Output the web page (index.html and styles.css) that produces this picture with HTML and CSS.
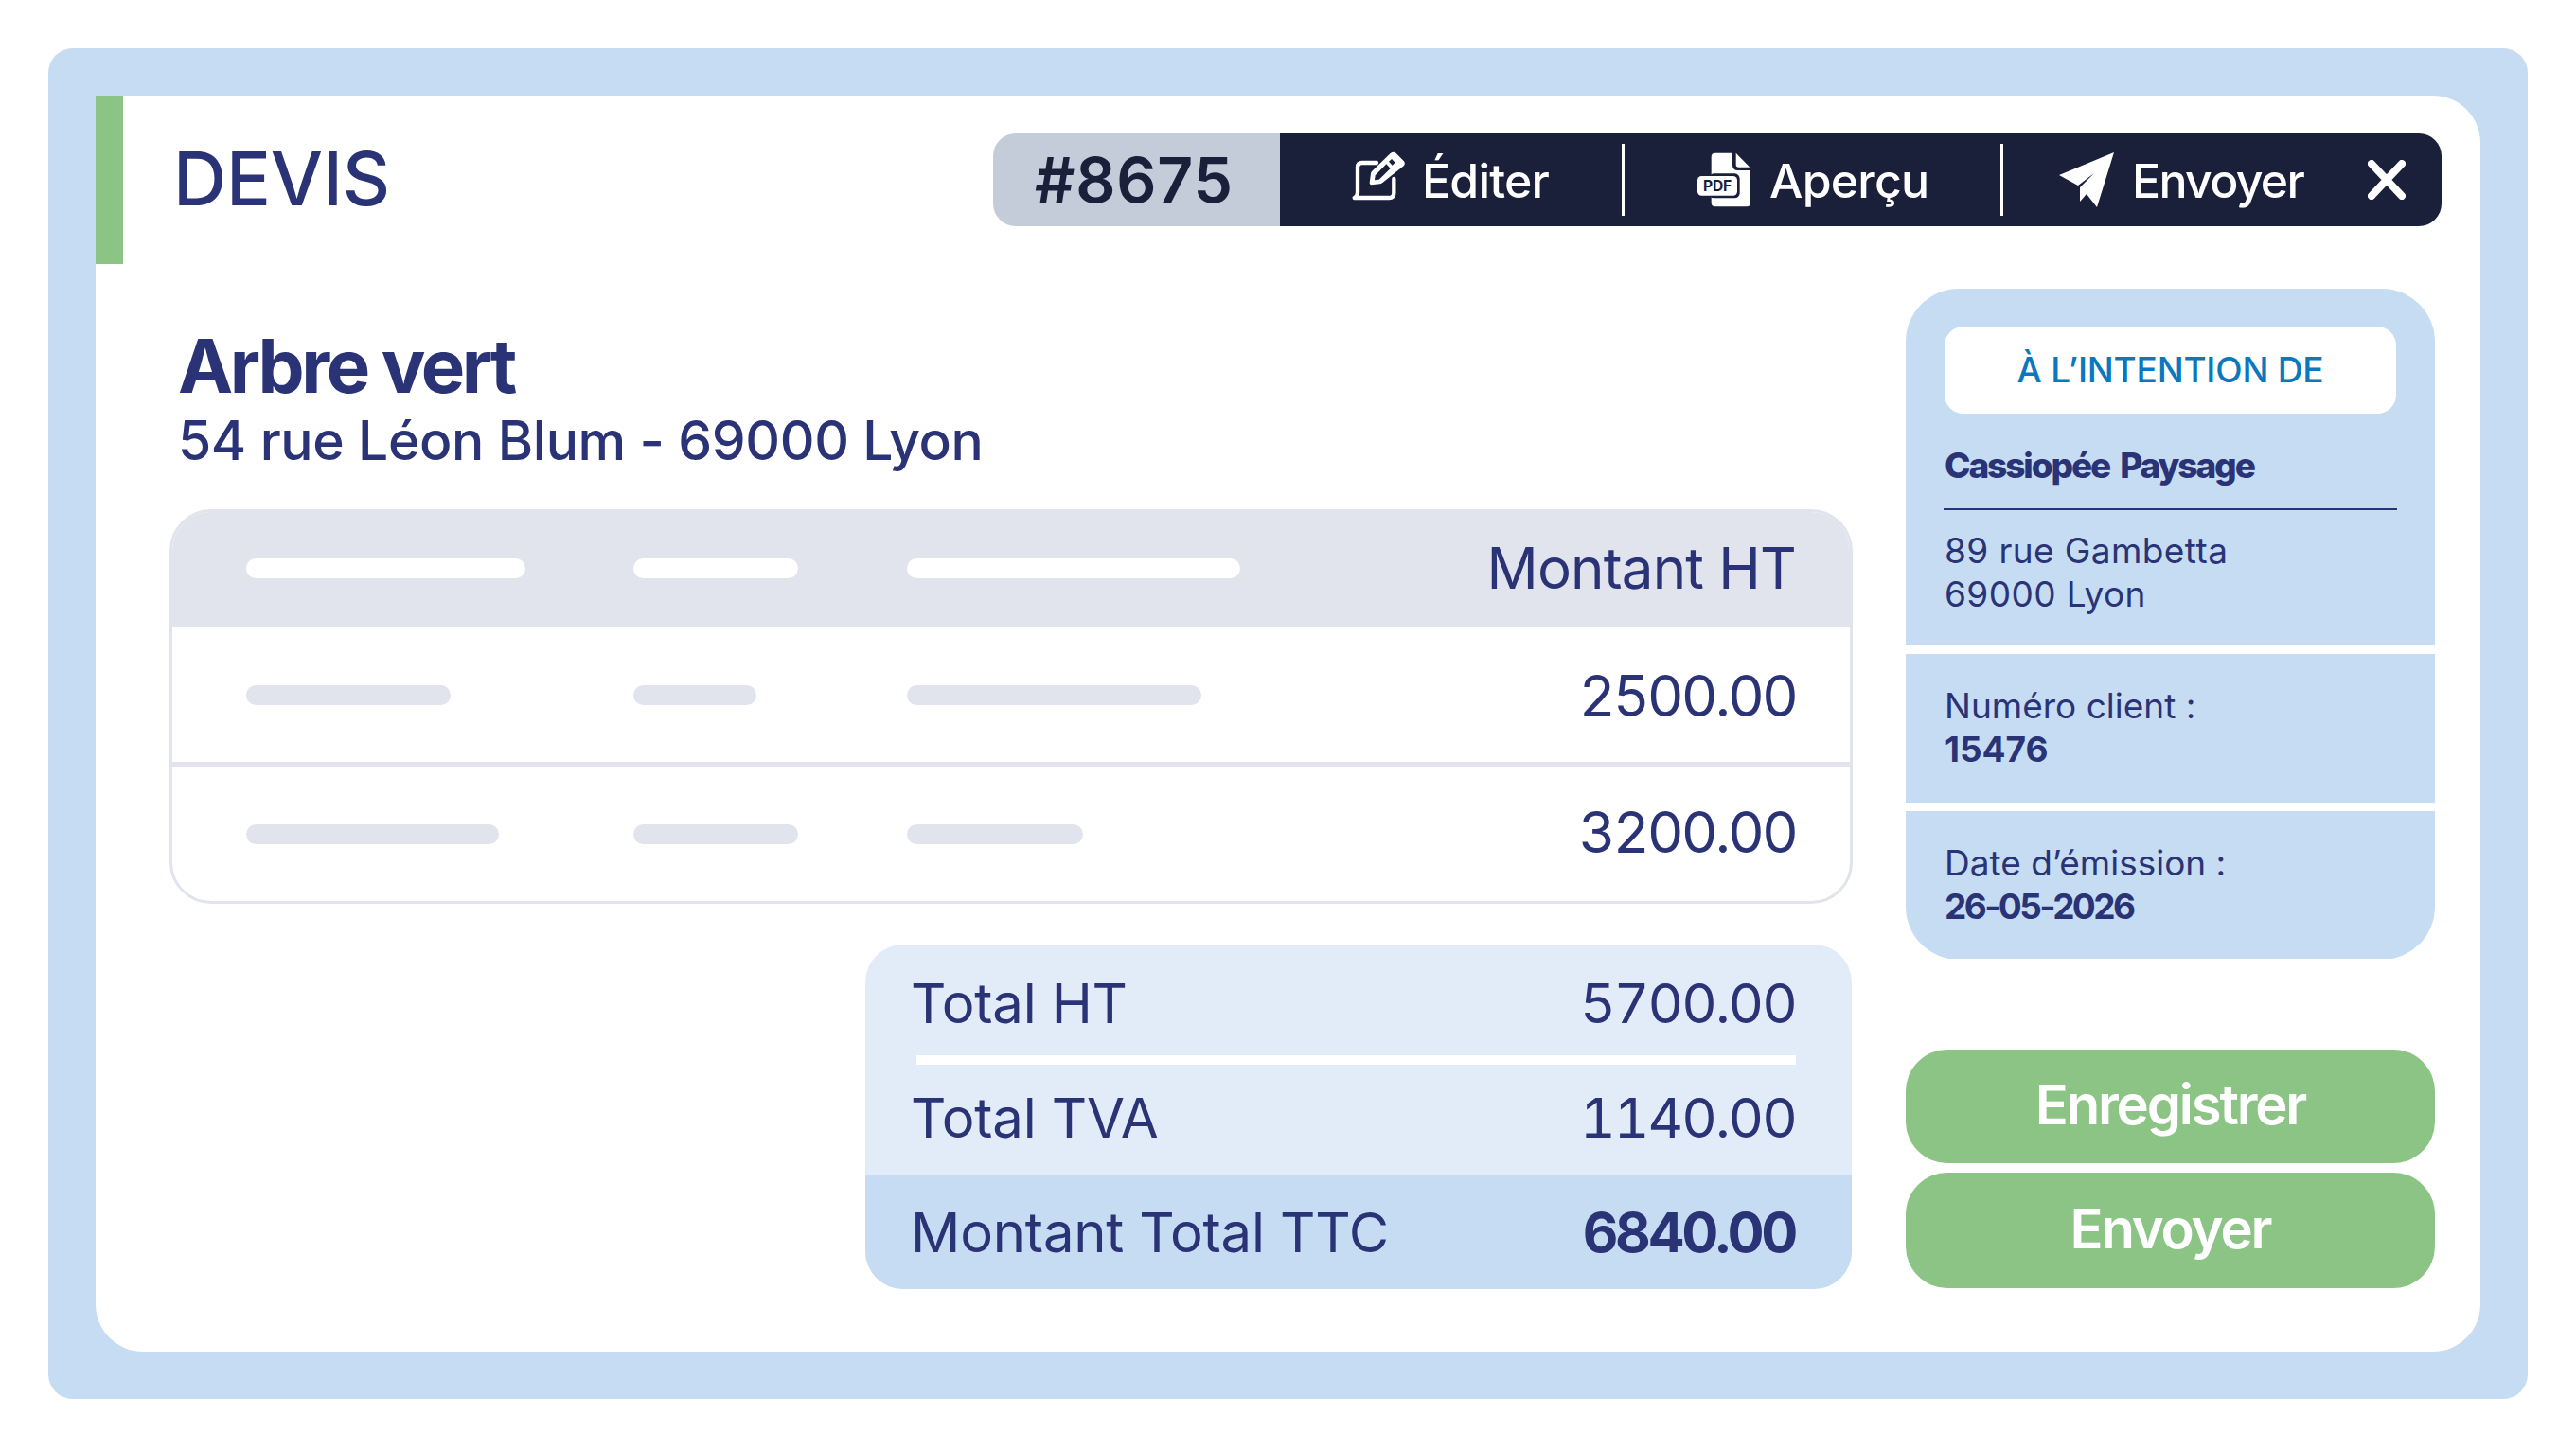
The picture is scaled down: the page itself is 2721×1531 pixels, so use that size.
FILE: index.html
```html
<!DOCTYPE html>
<html lang="fr">
<head>
<meta charset="utf-8">
<title>Devis</title>
<link rel="stylesheet" href="styles.css">
</head>
<body>
<main class="frame">
  <div class="card">
    <header class="head">
      <div class="accent"></div>
      <h1 class="title">DEVIS</h1>
      <nav class="toolbar">
        <div class="ref">#8675</div>
        <div class="actions">
          <div class="action action-edit">
            <svg class="icon" viewBox="0 0 225 225" fill="none"><path stroke="#fff" stroke-width="13" stroke-linecap="round" stroke-linejoin="round" d="M102 66H56Q42 66 42 80V160Q42 172 32 177H142Q157 177 157 162V117"/><path fill="#fff" fill-rule="evenodd" d="M146 36Q156 28 164 36L188 60Q195 68 188 76L120 130Q117 133 112 133L86 136Q80 136 80 130L84 100Q84 96 88 92ZM150 54L141 62L152 74L161 65ZM133 70L98 106L96 121L110 119L146 84Z"/></svg>
            <span>Éditer</span>
          </div>
          <div class="action action-pdf">
            <svg class="icon" viewBox="0 0 225 225"><path fill="#fff" d="M80 35H135V72Q135 90 152 90H192V193Q192 205 180 205H80Q68 205 68 193V47Q68 35 80 35Z"/><path fill="#fff" d="M146 35L190 80H155Q146 80 146 71Z"/><rect x="60" y="100" width="98" height="78" rx="16" fill="#1a1f3a"/><rect x="24" y="108" width="126" height="62" rx="13" fill="#fff"/><text x="87" y="155" text-anchor="middle" class="pdf-label">PDF</text></svg>
            <span>Aperçu</span>
          </div>
          <div class="action action-send">
            <svg class="icon-send" viewBox="0 0 58 58"><path fill="#fff" d="M58 0L0 24L20 35L37 22L22 37L22 52L29 44L40 58Z"/></svg>
            <span>Envoyer</span>
          </div>
          <svg class="icon-close" viewBox="0 0 40 42" fill="none" stroke="#fff" stroke-width="8" stroke-linecap="round"><path d="M4 4L36 38M36 4L4 38"/></svg>
        </div>
      </nav>
    </header>
    <div class="content">
      <section class="main-col">
        <h2 class="company">Arbre vert</h2>
        <p class="address">54 rue Léon Blum - 69000 Lyon</p>
        <div class="table">
          <div class="row row-head">
            <div class="bars"><i class="bar b1 w295"></i><i class="bar b2 w174"></i><i class="bar b3 w352"></i></div>
            <span class="amount">Montant HT</span>
          </div>
          <div class="row row-first">
            <div class="bars"><i class="bar b1 w216"></i><i class="bar b2 w130"></i><i class="bar b3 w311"></i></div>
            <span class="amount num">2500.00</span>
          </div>
          <div class="row row-last">
            <div class="bars"><i class="bar b1 w267"></i><i class="bar b2 w174"></i><i class="bar b3 w186"></i></div>
            <span class="amount num num-up">3200.00</span>
          </div>
        </div>
        <div class="totals">
          <div class="total total-ht"><span>Total HT</span><span class="num">5700.00</span></div>
          <div class="total total-tva"><span>Total TVA</span><span class="num">1140.00</span></div>
          <div class="total total-ttc"><span>Montant Total TTC</span><strong>6840.00</strong></div>
        </div>
      </section>
      <aside class="side-col">
        <div class="info">
          <div class="info-block info-to">
            <div class="pill">À L’INTENTION DE</div>
            <div class="client">Cassiopée Paysage</div>
            <div class="client-addr">89 rue Gambetta<br>69000 Lyon</div>
          </div>
          <div class="info-block info-num">Numéro client :<br><b>15476</b></div>
          <div class="info-block info-date">Date d’émission :<br><b class="date">26-05-2026</b></div>
        </div>
        <div class="buttons">
          <button class="btn">Enregistrer</button>
          <button class="btn">Envoyer</button>
        </div>
      </aside>
    </div>
  </div>
</main>
</body>
</html>
```

FILE: styles.css
```css
* { box-sizing: border-box; }
html, body { margin: 0; padding: 0; background: #fff; }
body { width: 2721px; height: 1531px; padding-top: 51px; font-family: Inter, "Liberation Sans", sans-serif; color: #2a3375; }
h1, h2, p { margin: 0; font-weight: 400; }
.frame { margin: 0 51px; width: 2619px; height: 1427px; padding: 50px; background: #c6dcf3; border-radius: 26px; }
.card { width: 2519px; height: 1327px; background: #fff; border-radius: 0 50px 50px 50px; }
.head { display: flex; height: 178px; align-items: flex-start; }
.accent { width: 29px; height: 178px; background: #8bc484; }
.title { margin-left: 53px; margin-top: -1px; height: 178px; font-size: 78px; font-weight: 450; line-height: 178px; letter-spacing: -0.3px; }
.toolbar { display: flex; margin-left: auto; margin-right: 41px; margin-top: 40px; height: 98px; border-radius: 24px; overflow: hidden; }
.ref { width: 303px; padding-left: 44px; background: #c4cbd9; color: #1a1f3a; font-size: 66px; font-weight: 600; line-height: 98px; letter-spacing: 0.8px; }
.actions { display: flex; width: 1227px; background: #1a1f3a; color: #fff; font-size: 50px; font-weight: 500; align-items: center; }
.action { display: flex; align-items: center; height: 76px; line-height: 76px; letter-spacing: -0.8px; }
.action span { padding-top: 2px; }
.icon { display: block; flex: none; width: 75px; height: 75px; margin-top: -5px; }
.action-edit { width: 364px; padding-left: 68px; border-right: 3px solid #fff; gap: 7px; }
.action-pdf { width: 400px; padding-left: 69px; border-right: 3px solid #fff; gap: 9px; }
.action-send { padding-left: 59px; gap: 19px; letter-spacing: -1.7px; }
.icon-send { display: block; flex: none; width: 58px; height: 58px; }
.pdf-label { font-family: Inter, sans-serif; font-size: 47px; font-weight: 700; fill: #1a1f3a; }
.icon-close { width: 40px; height: 42px; margin-left: auto; margin-right: 38px; }
.content { display: flex; padding: 26px 48px 0 78px; gap: 56px; }
.main-col { width: 1778px; }
.side-col { width: 559px; }
.company { margin: 39px 0 0 9px; font-size: 78px; font-weight: 700; line-height: 86px; letter-spacing: -3.4px; }
.address { margin-left: 9px; padding-top: 1px; font-size: 57px; font-weight: 450; line-height: 69px; letter-spacing: -0.4px; }
.table { margin-top: 38px; height: 417px; border: 3px solid #e1e4ec; border-radius: 44px; overflow: hidden; }
.row { display: flex; align-items: center; justify-content: space-between; padding: 0 57px 0 78px; font-size: 60px; }
.row-head { height: 124px; margin: -3px -3px 0; padding-right: 60px; padding-left: 81px; background: #e1e4ec; }
.row-first { height: 148px; border-bottom: 5px solid #e1e4ec; padding-top: 2px; }
.row-last { height: 142px; }
.bars { position: relative; width: 1100px; height: 21px; }
.bar { position: absolute; top: 0; height: 21px; border-radius: 11px; background: #e1e4ec; }
.row-head .bar { background: #fff; }
.b1 { left: 0; }
.b2 { left: 409px; }
.b3 { left: 698px; }
.w295 { width: 295px; }
.w174 { width: 174px; }
.w352 { width: 352px; }
.w216 { width: 216px; }
.w130 { width: 130px; }
.w311 { width: 311px; }
.w267 { width: 267px; }
.w186 { width: 186px; }
.amount { letter-spacing: -0.8px; }
.num { font-variant-numeric: tabular-nums; letter-spacing: -2.9px; }
.num-up { padding-bottom: 4px; }
.totals { margin: 43px 0 0 735px; width: 1042px; height: 364px; border-radius: 40px; overflow: hidden; background: #e2ecf9; font-size: 58px; }
.total { display: flex; justify-content: space-between; align-items: center; padding: 0 59px 0 48px; letter-spacing: -0.2px; }
.total-ht { position: relative; height: 127px; padding-bottom: 4px; }
.total-ht::after { content: ""; position: absolute; left: 54px; right: 59px; bottom: 0; height: 10px; background: #fff; }
.total-tva { height: 117px; padding-bottom: 6px; }
.total-ttc { height: 120px; background: #c6dcf3; padding-bottom: 1px; }
.total strong { font-weight: 700; letter-spacing: -3.4px; margin-right: 1px; }
.total .num { letter-spacing: -1.9px; }
.info { height: 709px; border-radius: 56px; overflow: hidden; display: flex; flex-direction: column; gap: 9px; font-size: 37px; line-height: 46px; }
.info-block { padding: 0 41px; background: #c6dcf3; }
.info-to { height: 377px; padding-top: 40px; }
.pill { height: 92px; background: #fff; border-radius: 20px; color: #0b77bd; text-align: center; line-height: 92px; font-weight: 500; letter-spacing: -0.2px; }
.client { height: 102px; margin: 0 -1px; padding: 0 1px; border-bottom: 2px solid #2a3375; font-weight: 800; line-height: 110px; letter-spacing: -2.1px; word-spacing: 5px; }
.client-addr { margin-top: 20px; letter-spacing: 0.4px; }
.info-num { height: 157px; padding-top: 32px; }
.info-date { height: 156px; padding-top: 32px; }
.info-block b { font-weight: 700; }
.info-block .date { letter-spacing: -2.6px; }
.buttons { margin-top: 95px; display: flex; flex-direction: column; gap: 10px; }
.btn { width: 559px; height: 120px; padding: 0 0 4px; border: 0; border-radius: 44px; background: #8bc484; color: #fff; font-family: inherit; font-size: 58px; font-weight: 600; letter-spacing: -2.2px; }
.btn + .btn { height: 122px; }
```
